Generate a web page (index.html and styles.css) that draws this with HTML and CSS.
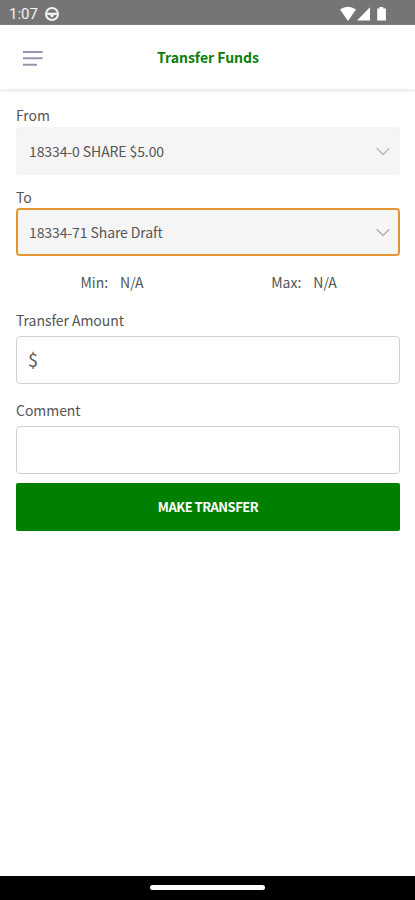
FILE: index.html
```html
<!DOCTYPE html>
<html lang="en">
<head>
<meta charset="utf-8">
<title>Transfer Funds</title>
<link rel="stylesheet" href="styles.css">
</head>
<body>
<div class="status">
  <span class="time">1:07</span>
  <svg class="app-icon" width="16" height="16" viewBox="0 0 16 16"><circle cx="8" cy="8" r="6" fill="none" stroke="#f4f4f4" stroke-width="2"/><path d="M2 7.8h12" fill="none" stroke="#f4f4f4" stroke-width="2.2"/><path d="M5.5 8.5h5L8.8 11.2H7.2Z" fill="#f4f4f4"/></svg>
  <svg class="signals" width="48" height="16" viewBox="0 0 48 16"><path fill="#fff" d="M0 3.6Q8 -2 16 3.6L8 15ZM30 1.2V14.5H17ZM37.2 3.8V2.6H39.3V1H43.2V2.6H45.9V14.6H37.2Z"/></svg>
</div>
<header class="header">
  <svg class="menu" width="20" height="17" viewBox="0 0 20 17"><path d="M0 2h19.5M0 8.2h19.5M0 14.7h14" stroke="#8e98aa" stroke-width="2"/></svg>
  <h1 class="title">Transfer Funds</h1>
</header>
<main class="form">
  <div class="label">From</div>
  <div class="box select"><span class="value">18334-0 SHARE $5.00</span><svg width="14" height="9" viewBox="0 0 14 9"><path d="M.7 1.2L7 7.5L13.3 1.2" fill="none" stroke="#b8b8b8" stroke-width="1.4"/></svg></div>
  <div class="label to-label">To</div>
  <div class="box select active"><span class="value">18334-71 Share Draft</span><svg width="14" height="9" viewBox="0 0 14 9"><path d="M.7 1.2L7 7.5L13.3 1.2" fill="none" stroke="#b0b0b0" stroke-width="1.4"/></svg></div>
  <div class="limits">
    <div class="limit"><span>Min:</span><span>N/A</span></div>
    <div class="limit"><span>Max:</span><span>N/A</span></div>
  </div>
  <div class="label amount-label">Transfer Amount</div>
  <div class="box input"><span class="currency">$</span></div>
  <div class="label comment-label">Comment</div>
  <div class="box input"></div>
  <button class="submit">MAKE TRANSFER</button>
</main>
<footer class="nav"><div class="handle"></div></footer>
</body>
</html>
```

FILE: styles.css
```css
* { box-sizing: border-box; }
body {
  margin: 0;
  height: 900px;
  display: flex;
  flex-direction: column;
  background: #fff;
  color: #555;
  font-family: "Noto Sans CJK SC", "Noto Sans", sans-serif;
  font-size: 14px;
  overflow: hidden;
}
.status {
  height: 25px;
  flex: none;
  display: flex;
  align-items: center;
  background: #757575;
  padding: 2px 27px 0 9px;
}
.time {
  color: #f4f4f4;
  font: 15px/20px Roboto, sans-serif;
  width: 35px;
}
.signals { margin-left: auto; }
.header {
  height: 64px;
  flex: none;
  display: grid;
  grid-template-columns: 23px 1fr 23px;
  align-items: center;
  padding: 2px 0 0;
  box-shadow: 0 2px 2px 1px #efefef;
}
.menu { grid-column: 2; grid-row: 1; }
.title {
  grid-column: 1 / 4;
  grid-row: 1;
  margin: 0;
  padding: 0 0 2px 1px;
  text-align: center;
  color: #0a800a;
  font-size: 14px;
  line-height: 20px;
  font-weight: 700;
}
.form {
  flex: 1;
  padding: 16px 15px 0 16px;
}
.label { height: 22px; line-height: 20px; letter-spacing: -.05px; }
.box {
  height: 48px;
  display: flex;
  align-items: center;
  border-radius: 4px;
}
.select {
  background: #f5f5f5;
  justify-content: space-between;
  padding: 0 10px 0 13px;
  line-height: 20px;
}
.value { letter-spacing: -.1px; padding-bottom: 1px; }
.to-label { margin-top: 12px; height: 21px; }
.active { border: 2px solid #e39532; padding: 0 8px 0 11px; }
.limits {
  display: grid;
  grid-template-columns: 1fr 1fr;
  height: 54px;
  line-height: 52px;
}
.limit { display: flex; justify-content: center; gap: 12px; }
.amount-label { height: 26px; line-height: 20px; }
.input { border: 1px solid #cfd1d3; padding-left: 11px; }
.currency { font-size: 18px; line-height: 24px; padding-bottom: 2px; }
.comment-label { margin-top: 16px; height: 26px; line-height: 20px; }
.submit {
  display: block;
  width: 100%;
  height: 48px;
  margin-top: 9px;
  border: 0;
  border-radius: 2px;
  background: #008000;
  color: #fff;
  font-family: inherit;
  font-size: 13px;
  line-height: 20px;
  letter-spacing: -.5px;
  font-weight: 700;
}
.nav {
  height: 24px;
  flex: none;
  display: flex;
  justify-content: center;
  padding-top: 9px;
  background: #000;
}
.handle { width: 115px; height: 5px; border-radius: 3px; background: #fff; }
```
